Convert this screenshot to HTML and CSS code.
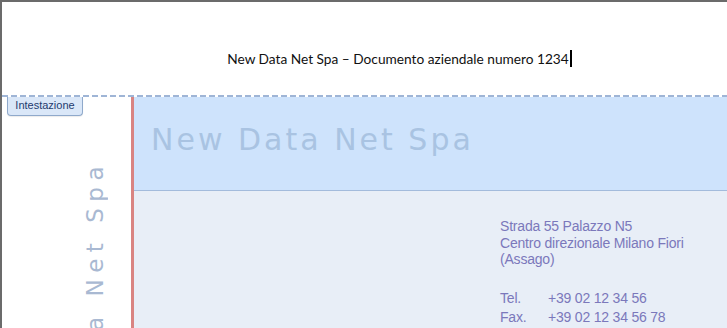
FILE: index.html
```html
<!DOCTYPE html>
<html lang="it">
<head>
  <meta charset="UTF-8" />
  <title>New Data Net Spa – Intestazione</title>
  <link rel="stylesheet" href="styles.css">
</head>
<body>

<div class="window">
  <!-- page header (running text) -->
  <div class="page-header">
    <span class="header-text">New Data Net Spa – Documento aziendale numero 1234</span><span class="caret"></span>
  </div>

  <div class="dash-line"></div>

  <div class="letterhead">
    <div class="tab">Intestazione</div>

    <div class="side">
      <div class="side-text">New Data Net Spa</div>
    </div>

    <div class="content">
      <div class="banner">
        <div class="banner-title">New Data Net Spa</div>
      </div>
      <div class="panel">
        <div class="address">
          <div>Strada 55 Palazzo N5</div>
          <div>Centro direzionale Milano Fiori</div>
          <div>(Assago)</div>
        </div>
        <div class="contacts">
          <span>Tel.</span><span>+39 02 12 34 56</span>
          <span>Fax.</span><span>+39 02 12 34 56 78</span>
        </div>
      </div>
    </div>
  </div>
</div>

</body>
</html>
```

FILE: styles.css
```css
html, body {
  margin: 0;
  height: 100%;
  overflow: hidden;
}
body {
  background: #fff;
  font-family: 'Liberation Sans', Arial, sans-serif;
}
.window {
  height: 100%;
  border-top: 2px solid #6b6b6b;
  border-left: 2px solid #6b6b6b;
  box-sizing: border-box;
  display: flex;
  flex-direction: column;
}
.page-header {
  height: 93px;
  display: flex;
  justify-content: center;
  align-items: flex-start;
  padding: 48px 0 0 70px;
  box-sizing: border-box;
  font-family: Lato, 'Open Sans', sans-serif;
  font-size: 13.7px;
  color: #111;
}
.header-text {
  line-height: 17px;
}
.caret {
  display: inline-block;
  width: 2px;
  height: 17px;
  margin-left: 1px;
  background: #000;
}
.dash-line {
  height: 2px;
  background: repeating-linear-gradient(90deg, #9fb5d6 0 6px, transparent 6px 9px);
}
.letterhead {
  flex: 1;
  display: flex;
  position: relative;
  min-height: 0;
}
.tab {
  position: absolute;
  top: 0;
  left: 5px;
  width: 74px;
  height: 18px;
  line-height: 17px;
  text-align: center;
  font-size: 11px;
  color: #1f3b6e;
  background: #dae7f8;
  border: 1px solid #8fa9cb;
  border-top: none;
  border-radius: 0 0 4px 4px;
  box-shadow: 0 1px 1px rgba(0,0,0,0.08);
}
.side {
  width: 129px;
  border-right: 3px solid #d98482;
  overflow: hidden;
}
.side-text {
  writing-mode: vertical-rl;
  transform: rotate(180deg);
  margin: 63px 0 0 78px;
  font-family: 'DejaVu Sans', Verdana, sans-serif;
  font-size: 23px;
  letter-spacing: 6.5px;
  line-height: 30px;
  color: #a9b9d2;
  white-space: nowrap;
}
.content {
  flex: 1;
  display: flex;
  flex-direction: column;
}
.banner {
  height: 94px;
  background: #cee3fc;
  border-bottom: 1px solid #a3bbdc;
  padding: 25px 0 0 17px;
  box-sizing: border-box;
}
.banner-title {
  font-family: 'DejaVu Sans', Verdana, sans-serif;
  font-size: 30px;
  letter-spacing: 3px;
  line-height: 36px;
  color: #a9c3e2;
  white-space: nowrap;
}
.panel {
  flex: 1;
  background: #e8eef7;
  padding: 27px 0 0 366px;
  font-size: 14px;
  color: #7b78bb;
}
.address {
  line-height: 16.5px;
  letter-spacing: -0.2px;
}
.contacts {
  margin-top: 21px;
  display: grid;
  grid-template-columns: 48px auto;
  line-height: 19px;
  letter-spacing: -0.2px;
}
```
